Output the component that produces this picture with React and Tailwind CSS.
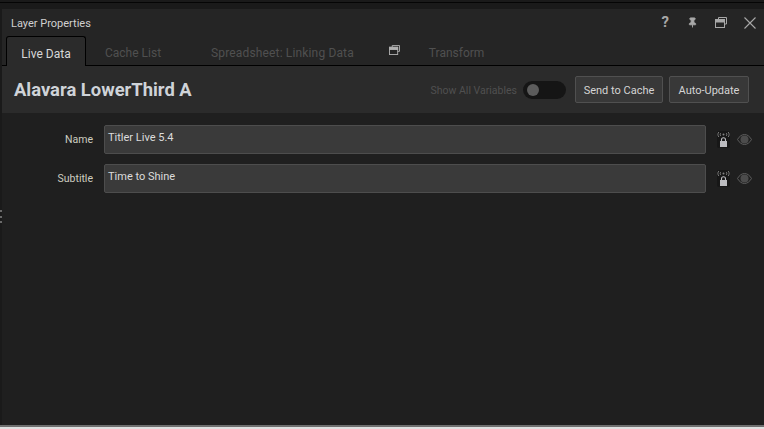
import { Pin } from "lucide-react"

function WindowsIcon({ className }) {
  return (
    <svg viewBox="0 0 12 11" className={className} fill="none" stroke="currentColor">
      <path d="M3.5 2.5V.5h8v6.5H9.5" strokeWidth="1" />
      <rect x="0.5" y="2.5" width="9" height="8" strokeWidth="1" />
      <rect x="0.5" y="2.5" width="9" height="2.5" fill="currentColor" strokeWidth="1" />
    </svg>
  )
}

function LockIcon() {
  return (
    <div className="w-[13px] h-[17px] rounded-[2px] bg-[#171717]">
      <svg viewBox="0 0 13 17" className="w-[13px] h-[17px]" fill="none">
        <path d="M1.8 1c-1.2 1.7-1.2 3.3 0 5M11.2 1c1.2 1.7 1.2 3.3 0 5M3.8 2c-.8 1.1-.8 1.9 0 3M9.2 2c.8 1.1.8 1.9 0 3" stroke="#858585" strokeWidth="0.9" />
        <circle cx="6.5" cy="3.5" r="1" fill="#858585" />
        <path d="M4.5 10.5V8.8a2 2 0 0 1 4 0v1.7" stroke="#bcbcc0" strokeWidth="1.1" />
        <rect x="3" y="10" width="7" height="6" fill="#bcbcc0" />
      </svg>
    </div>
  )
}

function EyeIcon() {
  return (
    <svg viewBox="0 0 15 11" className="ml-[7px] -mt-[1px] w-[15px] h-[11px]" fill="none">
      <path d="M.5 5.5C2.5 2 5 .5 7.5.5S12.5 2 14.5 5.5C12.5 9 10 10.5 7.5 10.5S2.5 9 .5 5.5Z" stroke="#5c5c5c" />
      <circle cx="7.5" cy="5.5" r="4" fill="#4c4c4c" />
    </svg>
  )
}

function FieldRow({ label, value }) {
  return (
    <div className="flex items-center h-[29px]">
      <div className="w-[91px] text-right text-[10.5px] leading-none text-[#cdcdc0] pt-[1px]">{label}</div>
      <div className="ml-[11px] w-[602px] h-[29px] bg-[#3a3a3a] border border-[#4d4d4d] rounded-[2px] px-[3px] pt-[4px] text-[11px] leading-[15px] text-[#dcdcdc]">
        {value}
      </div>
      <div className="ml-[11px]">
        <LockIcon />
      </div>
      <EyeIcon />
    </div>
  )
}

export default function App() {
  const font = { fontFamily: 'Roboto, sans-serif' }
  return (
    <div style={font} className="relative w-[764px] h-[429px] overflow-hidden bg-[#e0e0e0] flex flex-col">
      <div className="h-[427px] flex flex-col bg-[#1a1a1a] border-b-2 border-[#6f6f6f]">
        <div className="h-[2px] shrink-0" />
        <div className="h-[1px] bg-[#050505] shrink-0" />
        <div className="h-[6px] shrink-0" />
        <div className="flex-1 ml-[2px] flex flex-col bg-[#1f1f1f] min-h-0">
          <div className="h-[27px] shrink-0 bg-[#252525] flex items-center pl-[9px] pr-[8px]">
            <span className="text-[11px] text-[#d0d0d0] pt-[3px]">Layer Properties</span>
            <div className="ml-auto flex items-center text-[#a8a8a8]">
              <span className="text-[15px] font-bold leading-none">?</span>
              <Pin className="ml-[18px] w-[11px] h-[11px]" fill="currentColor" />
              <WindowsIcon className="ml-[17px] w-[12px] h-[11px]" />
              <svg viewBox="0 0 12 12" className="ml-[17px] w-[12px] h-[12px]" stroke="currentColor" strokeWidth="1.1">
                <path d="M.5.5l11 11M11.5.5l-11 11" />
              </svg>
            </div>
          </div>
          <div className="h-[30px] shrink-0 bg-[#252525] flex items-end border-b border-black text-[12px]">
            <div className="ml-[4px] w-[80px] h-[30px] -mb-[1px] pt-[4px] bg-[#2b2b2b] border border-b-0 border-black rounded-t-[3px] flex items-center justify-center text-[#d8d8d8]">
              Live Data
            </div>
            <div className="h-[29px] pt-[4px] flex items-center text-[#505050]">
              <span className="ml-[19px]">Cache List</span>
              <span className="ml-[50px] tracking-[0.15px]">Spreadsheet: Linking Data</span>
              <WindowsIcon className="ml-[35px] -mt-[5px] w-[11px] h-[10px] text-[#b0b0b0]" />
              <span className="ml-[29px]">Transform</span>
            </div>
          </div>
          <div className="h-[47px] shrink-0 bg-[#2b2b2b] flex items-center pl-[12px] pr-[15px]">
            <h1 className="text-[18.4px] font-bold text-[#cfd3d8]">Alavara LowerThird A</h1>
            <span className="ml-auto pt-[3px] text-[10.5px] text-[#505050]">Show All Variables</span>
            <div className="ml-[6px] w-[43px] h-[18px] rounded-full bg-[#151515] flex items-center pl-[4px]">
              <div className="w-[12px] h-[12px] rounded-full bg-[#5c5c5c]" />
            </div>
            <button className="ml-[9px] w-[88px] h-[27px] pt-[3px] bg-[#383838] border border-[#505050] rounded-[2px] text-[11px] text-[#d4d4d4]">
              Send to Cache
            </button>
            <button className="ml-[6px] w-[80px] h-[27px] pt-[3px] bg-[#383838] border border-[#505050] rounded-[2px] text-[11px] text-[#d4d4d4]">
              Auto-Update
            </button>
          </div>
          <div className="flex-1 pt-[12px] flex flex-col gap-[10px]">
            <FieldRow label="Name" value="Titler Live 5.4" />
            <FieldRow label="Subtitle" value="Time to Shine" />
          </div>
        </div>
      </div>
      <div className="absolute left-0 top-[210px] h-[13px] w-[2px] flex flex-col justify-between">
        <div className="h-[2px] bg-[#6a6a6a]" />
        <div className="h-[2px] bg-[#6a6a6a]" />
        <div className="h-[2px] bg-[#6a6a6a]" />
      </div>
    </div>
  )
}
